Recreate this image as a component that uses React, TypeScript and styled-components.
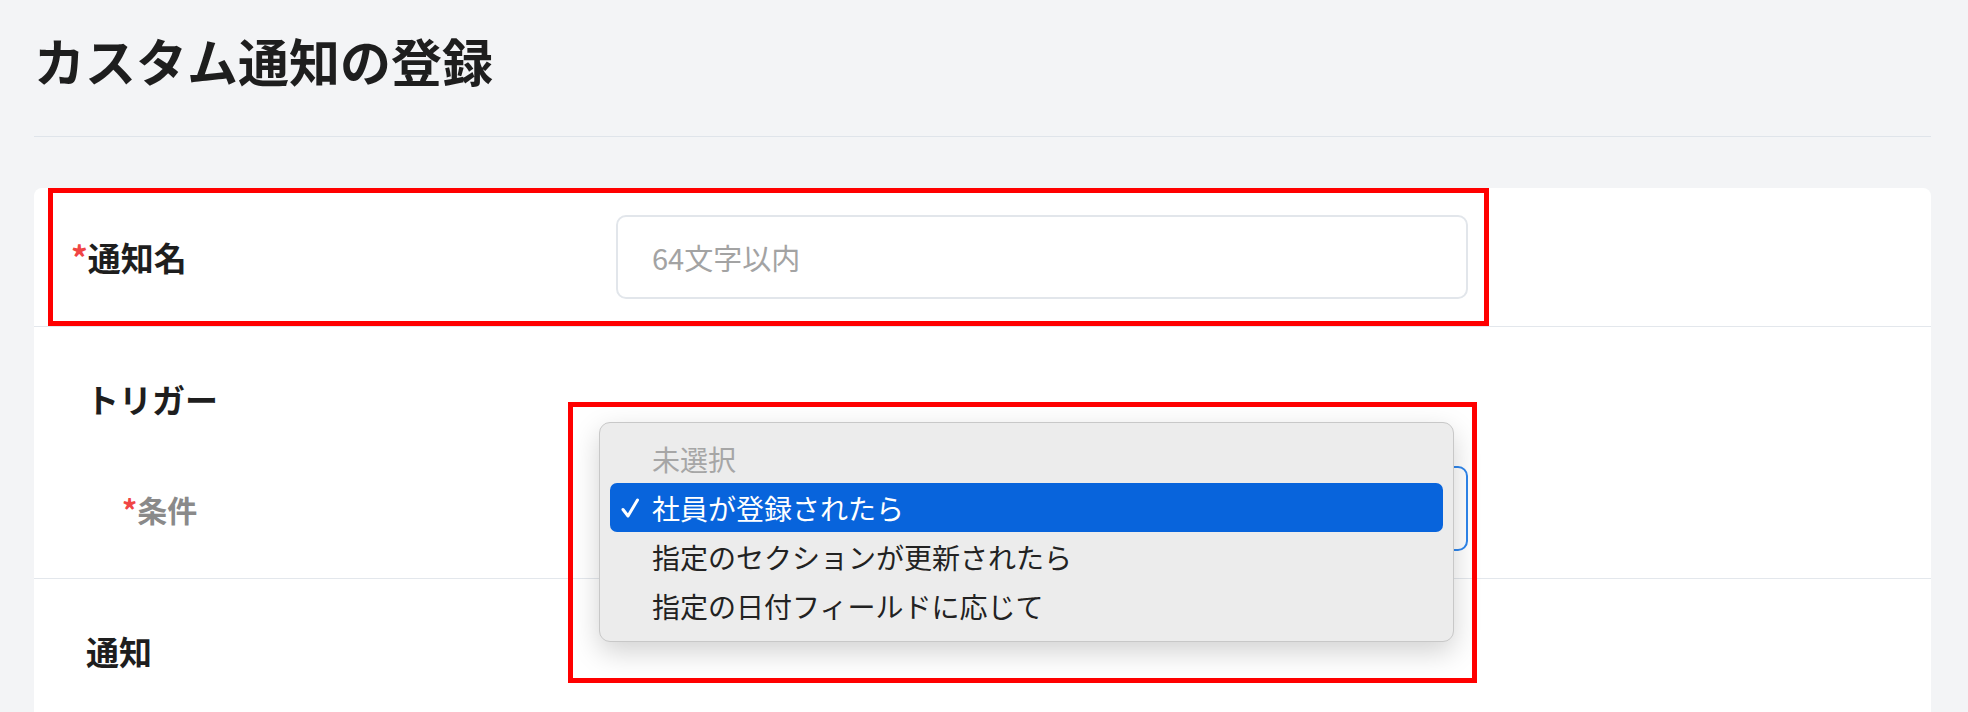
import styled, { createGlobalStyle } from 'styled-components';

const GlobalStyle = createGlobalStyle`
  html, body {
    margin: 0;
    background: #f3f4f6;
  }
  body {
    font-family: "Noto Sans CJK JP", "Noto Sans", sans-serif;
    color: #1e1e1e;
  }
`;

const options = [
    { label: '未選択', muted: true },
    { label: '社員が登録されたら', selected: true },
    { label: '指定のセクションが更新されたら' },
    { label: '指定の日付フィールドに応じて' },
];

const CheckIcon = () => (
    <svg width="22" height="22" viewBox="0 0 22 22" fill="none">
        <path d="M4 12.5 L9 19 L18.5 3" stroke="#fff" strokeWidth="3" strokeLinecap="round" strokeLinejoin="round" />
    </svg>
);

const App = () => {
    return (
        <>
            <GlobalStyle />
            <Page>
                <Title>カスタム通知の登録</Title>
                <Divider />
                <Card>
                    <NameSection>
                        <Annotated>
                            <FieldLabel>
                                <Required>*</Required>通知名
                            </FieldLabel>
                            <TextInput placeholder="64文字以内" />
                        </Annotated>
                    </NameSection>

                    <Section $bottom={27}>
                        <SectionHeading>トリガー</SectionHeading>
                        <ConditionRow>
                            <ConditionLabel>
                                <Required>*</Required>条件
                            </ConditionLabel>
                            <SelectBox>
                                <MenuAnnotation>
                                    <Popup>
                                        {options.map((o) => (
                                            <Option key={o.label} $selected={o.selected} $muted={o.muted}>
                                                <CheckSlot>{o.selected && <CheckIcon />}</CheckSlot>
                                                {o.label}
                                            </Option>
                                        ))}
                                    </Popup>
                                </MenuAnnotation>
                            </SelectBox>
                        </ConditionRow>
                    </Section>

                    <Section $bottom={0} $last>
                        <SectionHeading>通知</SectionHeading>
                    </Section>
                </Card>
            </Page>
        </>
    )
}

export default App

const Page = styled.div`
  display: flex;
  flex-direction: column;
  height: 712px;
  overflow: hidden;
  box-sizing: border-box;
  padding: 28px 37px 0 34px;
`;

const Title = styled.h1`
  margin: 0;
  font-size: 51px;
  line-height: 64px;
  font-weight: 700;
  color: #1e1e1e;
`;

const Divider = styled.div`
  margin-top: 44px;
  height: 1px;
  background: #dfe4ea;
`;

const Card = styled.div`
  flex: 1;
  margin-top: 51px;
  background: #fff;
  border-radius: 8px 8px 0 0;
`;

const NameSection = styled.section`
  padding-left: 14px;
  border-bottom: 1px solid #e3e7ec;
`;

const Annotated = styled.div`
  box-sizing: border-box;
  width: 1441px;
  height: 138px;
  border: 5px solid #ff0000;
  display: flex;
  align-items: center;
  padding-left: 18px;
`;

const FieldLabel = styled.label`
  flex-shrink: 0;
  width: 545px;
  font-size: 33px;
  font-weight: 700;
  line-height: 40px;
  color: #1e1e1e;
`;

const Required = styled.span`
  color: #f04545;
`;

const TextInput = styled.input`
  box-sizing: border-box;
  width: 852px;
  height: 84px;
  border: 2px solid #e2e6eb;
  border-radius: 10px;
  padding: 0 34px;
  font-family: "Noto Sans CJK JP", "Noto Sans", sans-serif;
  font-size: 29px;
  color: #1e1e1e;
  background: #fff;
  outline: none;

  &::placeholder {
    color: #a3a3a3;
  }
`;

const Section = styled.section<{ $bottom: number; $last?: boolean }>`
  padding: 52px 0 ${(p) => p.$bottom}px 52px;
  border-bottom: ${(p) => (p.$last ? 'none' : '1px solid #e3e7ec')};
`;

const SectionHeading = styled.h2`
  margin: 0;
  font-size: 33px;
  line-height: 40px;
  font-weight: 700;
  color: #1e1e1e;
`;

const ConditionRow = styled.div`
  margin-top: 47px;
  display: flex;
  align-items: center;
  padding-left: 36px;
`;

const ConditionLabel = styled.label`
  flex-shrink: 0;
  width: 494px;
  font-size: 30px;
  font-weight: 700;
  line-height: 40px;
  color: #8a8a8a;
`;

const SelectBox = styled.div`
  position: relative;
  box-sizing: border-box;
  width: 852px;
  height: 85px;
  border: 2px solid #2f86ec;
  border-radius: 10px;
  background: #fff;
`;

const MenuAnnotation = styled.div`
  position: absolute;
  left: -50px;
  top: -66px;
  z-index: 2;
  box-sizing: border-box;
  width: 909px;
  height: 281px;
  border: 5px solid #ff0000;
  padding: 15px 18px 36px 26px;
  display: flex;
`;

const Popup = styled.div`
  flex: 1;
  box-sizing: border-box;
  background: #ececec;
  border: 1px solid #c8c8c8;
  border-radius: 11px;
  padding: 11px 10px;
  box-shadow: 0 10px 28px rgba(0, 0, 0, 0.18);
`;

const Option = styled.div<{ $selected?: boolean; $muted?: boolean }>`
  height: 49px;
  display: flex;
  align-items: center;
  padding-left: 9px;
  border-radius: 7px;
  font-size: 28px;
  color: ${(p) => (p.$selected ? '#fff' : p.$muted ? '#a6a6a6' : '#222')};
  background: ${(p) => (p.$selected ? '#0864dc' : 'transparent')};
`;

const CheckSlot = styled.span`
  width: 33px;
  display: flex;
  align-items: center;
`;
